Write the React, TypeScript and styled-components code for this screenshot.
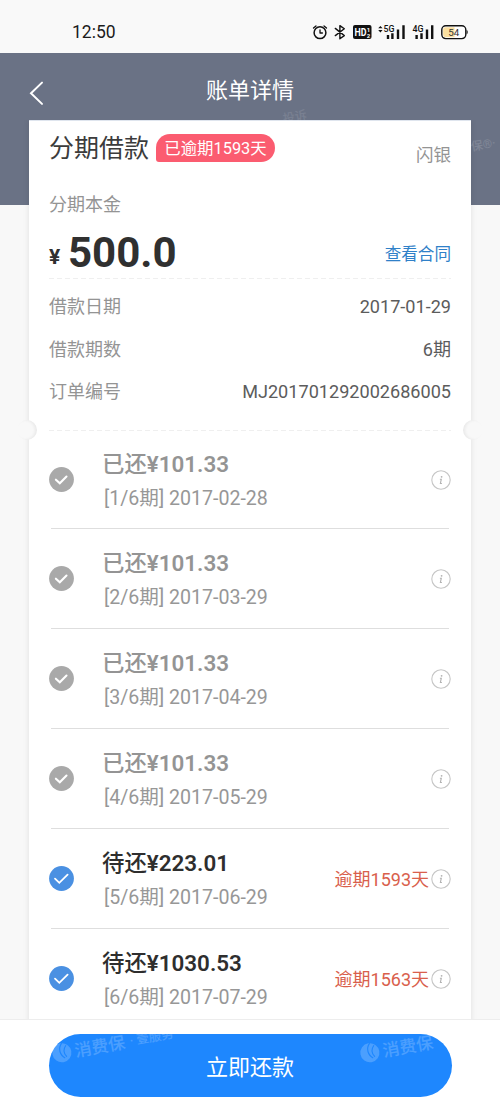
import React from "react";
import styled, { createGlobalStyle } from "styled-components";

const GlobalStyle = createGlobalStyle`
  * { box-sizing: border-box; }
  body {
    margin: 0;
    background: #f8f8f8;
    font-family: Roboto, "Noto Sans CJK SC", sans-serif;
  }
`;

const Screen = styled.div`
  position: relative;
  width: 500px;
  height: 1111px;
  overflow: hidden;
  display: flex;
  flex-direction: column;
`;

const StatusBar = styled.div`
  height: 53px;
  flex: none;
  display: flex;
  align-items: center;
  justify-content: space-between;
  padding: 11px 31px 0 72px;
  background: #f9f9f9;
`;

const Clock = styled.span`
  font-size: 17.5px;
  line-height: 22px;
  color: #1c1c1c;
`;

const Header = styled.header`
  height: 67px;
  flex: none;
  display: grid;
  grid-template-columns: 60px 1fr 60px;
  align-items: center;
  padding-top: 8px;
  background: #6a7285;
`;

const BackButton = styled.button`
  display: flex;
  margin: 4px 0 0 28px;
  padding: 0;
  border: 0;
  background: none;
`;

const HeaderTitle = styled.h1`
  margin: 0;
  text-align: center;
  font-size: 22px;
  font-weight: 400;
  line-height: 30px;
  color: #fff;
`;

const Body = styled.main`
  height: 899px;
  flex: none;
  overflow: hidden;
  padding: 0 29px;
  background: linear-gradient(#6a7285 85px, #f8f8f8 85px);
`;

const Card = styled.section`
  position: relative;
  background: #fff;
  box-shadow: 0 0 6px rgba(0, 0, 0, 0.1);
  border-top: 1px solid #dfe5ee;
`;

const Summary = styled.div`
  height: 311px;
  padding: 0 20px;
`;

const TitleRow = styled.div`
  display: flex;
  height: 56px;
  padding-top: 10px;
`;

const ProductName = styled.h2`
  margin: 1px 7px 0 0;
  font-size: 25px;
  font-weight: 400;
  line-height: 34px;
  color: #3c3c3c;
`;

const OverdueBadge = styled.span`
  width: 119px;
  height: 28px;
  margin-top: 3px;
  border-radius: 14px 14px 14px 3px;
  background: #fb5c70;
  color: #fff;
  font-size: 16.4px;
  line-height: 29px;
  text-align: center;
`;

const Lender = styled.span`
  margin-left: auto;
  padding-top: 11px;
  font-size: 17.5px;
  line-height: 26px;
  color: #949494;
`;

const Label = styled.span`
  font-size: 18px;
  line-height: 26px;
  color: #949494;
`;

const PrincipalLabel = styled(Label)`
  display: block;
  padding-top: 15px;
  height: 47px;
`;

const AmountRow = styled.div`
  display: flex;
  align-items: flex-end;
  height: 54px;
  padding-bottom: 8px;
`;

const Currency = styled.span`
  width: 19px;
  font-size: 21px;
  font-weight: 700;
  line-height: 26px;
  color: #303030;
`;

const Amount = styled.strong`
  font-size: 42px;
  font-weight: 700;
  line-height: 35px;
  color: #303030;
`;

const ContractLink = styled.a`
  margin-left: auto;
  padding-bottom: 2px;
  font-size: 16.6px;
  line-height: 26px;
  color: #2f80c8;
`;

const DashedRule = styled.div`
  height: 1px;
  background: repeating-linear-gradient(90deg, #efefef 0 5px, transparent 5px 8px);
`;

const Facts = styled.div`
  display: flex;
  flex-direction: column;
  gap: 16.5px;
  height: 151px;
  padding-top: 15px;
`;

const Fact = styled.div`
  display: flex;
  justify-content: space-between;
  font-size: 18.1px;
  line-height: 26px;
`;

const FactValue = styled.span`
  color: #5c5c5c;
`;

const Notch = styled.i<{ $side: "left" | "right" }>`
  position: absolute;
  top: 299px;
  ${(p) => p.$side}: -12px;
  width: 20px;
  height: 20px;
  border-radius: 50%;
  background: #f8f8f8;
  box-shadow: inset ${(p) => (p.$side === "left" ? "-2px" : "2px")} 0 3px rgba(0, 0, 0, 0.06);
`;

const List = styled.div`
  padding: 0 20px;
`;

const Row = styled.div<{ $first: boolean }>`
  display: flex;
  align-items: center;
  height: ${(p) => (p.$first ? 97 : 100)}px;
  padding-bottom: ${(p) => (p.$first ? 2 : 1)}px;
  background: linear-gradient(#dedede, #dedede) 2px 100% / 398px 1px no-repeat;
`;

const RowText = styled.div`
  margin-left: 28px;
  padding-top: 5px;
  display: flex;
  flex-direction: column;
  gap: 1px;
`;

const RowTitle = styled.span<{ $due: boolean }>`
  font-size: 22.4px;
  font-weight: 600;
  line-height: 33px;
  color: ${(p) => (p.$due ? "#2e2e2e" : "#949494")};
`;

const TitleWord = styled.span`
  font-weight: 500;
`;

const RowSub = styled.span`
  padding-left: 2px;
  font-size: 19.6px;
  line-height: 34px;
  color: #979797;
`;

const RowEnd = styled.div`
  display: flex;
  align-items: center;
  gap: 2px;
  margin-left: auto;
`;

const Overdue = styled.span`
  padding-top: 2px;
  font-size: 18px;
  line-height: 26px;
  color: #d9604c;
`;

const Footer = styled.footer`
  flex: 1;
  display: flex;
  justify-content: center;
  padding-top: 14px;
  border-top: 1px solid #ededed;
  background: #fff;
`;

const PayButton = styled.button`
  position: relative;
  width: 403px;
  height: 63px;
  padding: 0 0 1px;
  border: 0;
  border-radius: 32px;
  background: #1e87fe;
  color: #fff;
  font: inherit;
  font-size: 22px;
`;

const Mark = styled.span<{ $x: number; $y: number; $size?: number; $opacity?: number }>`
  position: absolute;
  left: ${(p) => p.$x}px;
  top: ${(p) => p.$y}px;
  display: flex;
  align-items: center;
  gap: 2px;
  white-space: nowrap;
  font-size: ${(p) => p.$size ?? 17}px;
  font-weight: 500;
  line-height: 20px;
  color: #fff;
  opacity: ${(p) => p.$opacity ?? 0.2};
  transform: rotate(-10deg);
  transform-origin: 0 50%;
  pointer-events: none;
`;

const MarkSmall = styled.span`
  margin-left: 3px;
  font-size: 12.5px;
`;

const Swirl = () => (
  <svg width="21" height="21" viewBox="0 0 22 22">
    <circle cx="10.5" cy="11" r="10" fill="currentColor" />
    <path d="M12 1c-5 5-4 12 1 16M16 4c-4 4-4 8-1 12" fill="none" stroke="#1e87fe" strokeWidth="1.2" />
  </svg>
);

const Tick = ({ due }: { due: boolean }) => (
  <svg width="25" height="25" viewBox="0 0 25 25">
    <circle cx="12.5" cy="12.5" r="12.4" fill={due ? "#4a90e2" : "#a9a9a9"} />
    <path
      d={due ? "M6 12.6l4.3 4.2 8.3-8.2" : "M6.9 12.7l3.9 3.6 6.7-6.8"}
      fill="none"
      stroke="#fff"
      strokeWidth={due ? 1.8 : 2.1}
      strokeLinecap="round"
    />
  </svg>
);

const Info = () => (
  <svg width="20" height="20" viewBox="0 0 20 20">
    <circle cx="10" cy="10" r="9.2" fill="none" stroke="#c6c6c6" strokeWidth="1.1" />
    <circle cx="10.6" cy="6.8" r="0.9" fill="#b2b2b2" />
    <path d="M8.9 9.2h1.4l-.9 4.3h1.5" fill="none" stroke="#b2b2b2" strokeWidth="1.1" />
  </svg>
);

const StatusIcons = () => (
  <svg width="157" height="20" viewBox="312 22 157 20" fontFamily="Roboto" fill="#111">
    <g fill="none" stroke="#111" strokeWidth="1.5" strokeLinecap="round" strokeLinejoin="round">
      <circle cx="320" cy="32.7" r="5.9" />
      <path d="M320 29.8v3.2h2.4M313.5 28.1l2.5-2.2M326.5 28.1l-2.5-2.2" strokeWidth="1.3" />
      <path d="M335.3 28.4l9 7.2-4.4 3.2V25.6l4.4 3.2-9 6.8" strokeWidth="1.4" />
    </g>
    <rect x="353" y="25" width="18.5" height="14" rx="2" />
    <text x="354.4" y="35.9" fontSize="10.5" fontWeight="700" fill="#fff" textLength="12" lengthAdjust="spacingAndGlyphs">HD</text>
    <text x="366.8" y="31.8" fontSize="6" fontWeight="700" fill="#fff">1</text>
    <text x="366.8" y="38" fontSize="6" fontWeight="700" fill="#fff">2</text>
    <path d="M378.2 28.3l2.2-2.4 2.2 2.4zM378.2 30l2.2 2.4 2.2-2.4z" />
    <text x="383.6" y="31.7" fontSize="9" fontWeight="500" textLength="11" lengthAdjust="spacingAndGlyphs">5G</text>
    <path d="M386.8 35h2.4v4h-2.4zM391.2 33.3h2.4V39h-2.4zM396.8 29.5h2.4V39h-2.4zM402.3 25.3h2.4V39h-2.4z" />
    <text x="412.4" y="31.7" fontSize="9" fontWeight="500" textLength="11" lengthAdjust="spacingAndGlyphs">4G</text>
    <path d="M415.4 35h2.4v4h-2.4zM420.3 33.3h2.4V39h-2.4zM425.8 29.5h2.4V39h-2.4zM431 25.3h2.4V39H431z" />
    <rect x="441.8" y="25.8" width="24" height="12.8" rx="4" fill="#fff" stroke="#111" strokeWidth="1.4" />
    <path d="M445.5 27.2h9v10h-9a2.4 2.4 0 0 1-2.4-2.4v-5.2a2.4 2.4 0 0 1 2.4-2.4z" fill="#fbe0a0" />
    <path d="M466.6 30c1.5.2 1.5 4 0 4.2z" />
    <text x="448.2" y="35.7" fontSize="9.8" fill="#333">54</text>
  </svg>
);

const facts = [
  ["借款日期", "2017-01-29"],
  ["借款期数", "6期"],
  ["订单编号", "MJ201701292002686005"],
];

const installments = [
  { amount: "101.33", date: "2017-02-28" },
  { amount: "101.33", date: "2017-03-29" },
  { amount: "101.33", date: "2017-04-29" },
  { amount: "101.33", date: "2017-05-29" },
  { amount: "223.01", date: "2017-06-29", overdue: "逾期1593天" },
  { amount: "1030.53", date: "2017-07-29", overdue: "逾期1563天" },
];

export default function App() {
  return (
    <Screen>
      <GlobalStyle />
      <StatusBar>
        <Clock>12:50</Clock>
        <StatusIcons />
      </StatusBar>
      <Header>
        <BackButton aria-label="返回">
          <svg width="18" height="26" viewBox="0 0 18 26">
            <path d="M14 2.6L3 13.3l11 10.6" fill="none" stroke="#fff" strokeWidth="2" strokeLinecap="round" />
          </svg>
        </BackButton>
        <HeaderTitle>账单详情</HeaderTitle>
      </Header>
      <Body>
        <Card>
          <Summary>
            <TitleRow>
              <ProductName>分期借款</ProductName>
              <OverdueBadge>已逾期1593天</OverdueBadge>
              <Lender>闪银</Lender>
            </TitleRow>
            <PrincipalLabel>分期本金</PrincipalLabel>
            <AmountRow>
              <Currency>¥</Currency>
              <Amount>500.0</Amount>
              <ContractLink>查看合同</ContractLink>
            </AmountRow>
            <DashedRule />
            <Facts>
              {facts.map(([label, value]) => (
                <Fact key={label}>
                  <Label>{label}</Label>
                  <FactValue>{value}</FactValue>
                </Fact>
              ))}
            </Facts>
            <DashedRule />
          </Summary>
          <Notch $side="left" />
          <Notch $side="right" />
          <List>
            {installments.map((item, i) => (
              <Row key={item.date} $first={i === 0}>
                <Tick due={!!item.overdue} />
                <RowText>
                  <RowTitle $due={!!item.overdue}>
                    <TitleWord>{item.overdue ? "待还" : "已还"}</TitleWord>¥{item.amount}
                  </RowTitle>
                  <RowSub>{`[${i + 1}/6期] ${item.date}`}</RowSub>
                </RowText>
                <RowEnd>
                  {item.overdue && <Overdue>{item.overdue}</Overdue>}
                  <Info />
                </RowEnd>
              </Row>
            ))}
          </List>
        </Card>
      </Body>
      <Footer>
        <PayButton>
          立即还款
          <Mark $x={3} $y={10}>
            <Swirl />
            消费保<MarkSmall>· 壹服务</MarkSmall>
          </Mark>
          <Mark $x={311} $y={10}>
            <Swirl />
            消费保
          </Mark>
        </PayButton>
      </Footer>
      <Mark $x={283} $y={109} $size={12} $opacity={0.1}>投诉</Mark>
      <Mark $x={471} $y={137} $size={12} $opacity={0.14}>保®·</Mark>
    </Screen>
  );
}
